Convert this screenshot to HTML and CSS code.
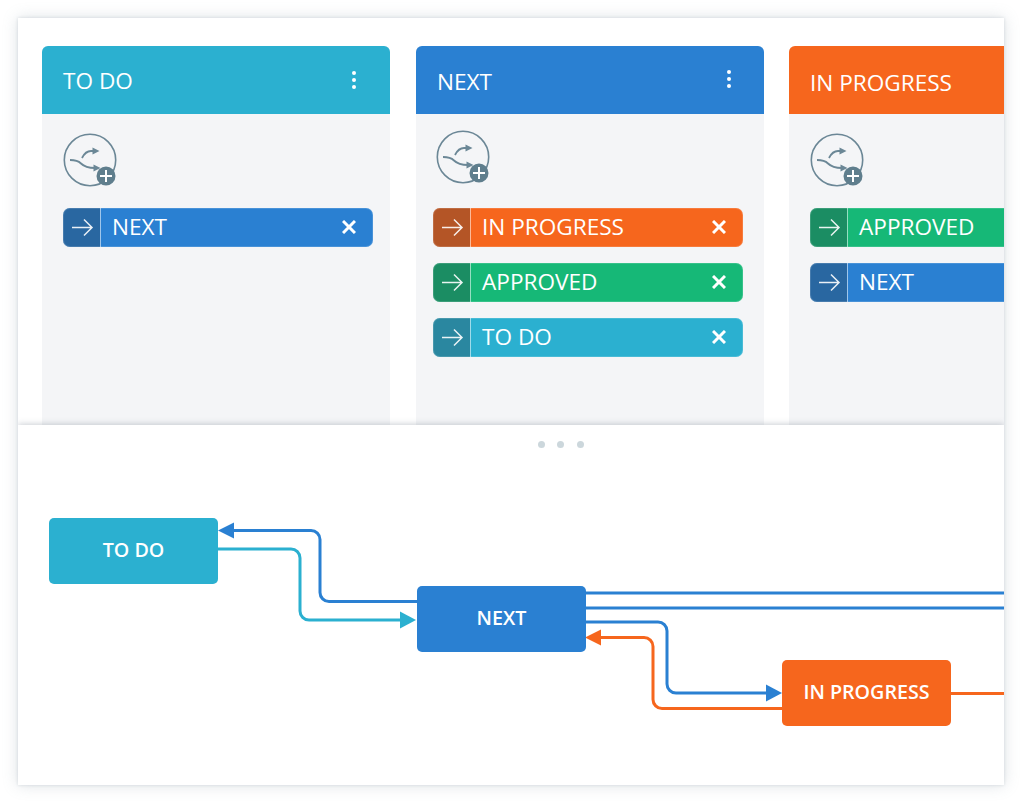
FILE: index.html
```html
<!DOCTYPE html>
<html lang="en">
<head>
<meta charset="utf-8">
<title>Workflow</title>
<link rel="stylesheet" href="styles.css">
</head>
<body>
<svg class="defs" width="0" height="0" aria-hidden="true">
  <defs>
    <symbol id="flow" viewBox="0 0 56 56">
      <circle cx="27" cy="27" r="25.700" fill="none" stroke="#6b8796" stroke-width="1.600"/>
      <path d="M7 27c5 0 8 .5 11 3.500s6 4.500 14 4.500" fill="none" stroke="#6b8796" stroke-width="1.800"/>
      <path d="M19 25c2-4 5-7 9-7h4" fill="none" stroke="#6b8796" stroke-width="1.800"/>
      <path d="M36.500 18l-7-3.500v7zM37.500 35l-7-3.500v7z" fill="#6b8796"/>
      <circle cx="43" cy="43" r="9.500" fill="#5f7e8d"/>
      <path d="M43 37v12M37 43h12" stroke="#fff" stroke-width="2"/>
    </symbol>
    <symbol id="arrow" viewBox="0 0 37 38">
      <path d="M9 19.500H29M21 11.500l8 8-8 8" fill="none" stroke="#fff" stroke-opacity=".9" stroke-width="1.500"/>
    </symbol>
    <symbol id="close" viewBox="0 0 14 14">
      <path d="M1 1l12 12M13 1L1 13" stroke="#fff" stroke-width="3"/>
    </symbol>
    <symbol id="kebab" viewBox="0 0 6 20">
      <circle cx="3" cy="3" r="2" fill="#fff"/>
      <circle cx="3" cy="10" r="2" fill="#fff"/>
      <circle cx="3" cy="17" r="2" fill="#fff"/>
    </symbol>
  </defs>
</svg>
<main class="panel">
  <section class="board">
    <article class="column">
      <header class="col-head cyan">
        <h2 class="col-title">TO DO</h2>
        <svg class="kebab"><use href="#kebab"/></svg>
      </header>
      <div class="col-body">
        <svg class="flow-icon"><use href="#flow"/></svg>
        <ul class="chips">
          <li class="chip blue"><span class="chip-arrow"><svg class="arrow-icon"><use href="#arrow"/></svg></span><span class="chip-label">NEXT</span><svg class="close-icon"><use href="#close"/></svg></li>
        </ul>
      </div>
    </article>
    <article class="column column-next">
      <header class="col-head blue">
        <h2 class="col-title">NEXT</h2>
        <svg class="kebab"><use href="#kebab"/></svg>
      </header>
      <div class="col-body">
        <svg class="flow-icon"><use href="#flow"/></svg>
        <ul class="chips">
          <li class="chip orange"><span class="chip-arrow"><svg class="arrow-icon"><use href="#arrow"/></svg></span><span class="chip-label">IN PROGRESS</span><svg class="close-icon"><use href="#close"/></svg></li>
          <li class="chip green"><span class="chip-arrow"><svg class="arrow-icon"><use href="#arrow"/></svg></span><span class="chip-label">APPROVED</span><svg class="close-icon"><use href="#close"/></svg></li>
          <li class="chip cyan"><span class="chip-arrow"><svg class="arrow-icon"><use href="#arrow"/></svg></span><span class="chip-label">TO DO</span><svg class="close-icon"><use href="#close"/></svg></li>
        </ul>
      </div>
    </article>
    <article class="column column-progress">
      <header class="col-head orange">
        <h2 class="col-title">IN PROGRESS</h2>
      </header>
      <div class="col-body">
        <svg class="flow-icon"><use href="#flow"/></svg>
        <ul class="chips">
          <li class="chip green"><span class="chip-arrow"><svg class="arrow-icon"><use href="#arrow"/></svg></span><span class="chip-label">APPROVED</span><svg class="close-icon"><use href="#close"/></svg></li>
          <li class="chip blue"><span class="chip-arrow"><svg class="arrow-icon"><use href="#arrow"/></svg></span><span class="chip-label">NEXT</span><svg class="close-icon"><use href="#close"/></svg></li>
        </ul>
      </div>
    </article>
  </section>
  <section class="diagram">
    <div class="grip"><i class="grip-dot"></i><i class="grip-dot"></i><i class="grip-dot"></i></div>
    <svg class="links" viewBox="18 425 986 360">
      <g fill="none" stroke-width="3">
        <path class="stroke-blue" d="M417 601.500H329a9 9 0 0 1-9-9V539.500a9 9 0 0 0-9-9H232"/>
        <path class="stroke-cyan" d="M218 549H291a9 9 0 0 1 9 9V611a9 9 0 0 0 9 9H402"/>
        <path class="stroke-blue" d="M586 593H1004M586 608H1004"/>
        <path class="stroke-blue" d="M586 622H658a9 9 0 0 1 9 9V684a9 9 0 0 0 9 9H769"/>
        <path class="stroke-orange" d="M782 708.500H662a9 9 0 0 1-9-9V646.500a9 9 0 0 0-9-9H599"/>
        <path class="stroke-orange" d="M951 693.500H1004"/>
      </g>
      <path class="fill-blue" d="M218 530.500l16-8v16z"/>
      <path class="fill-cyan" d="M416 620l-16-8.500v17z"/>
      <path class="fill-blue" d="M782 693l-16-8.500v17z"/>
      <path class="fill-orange" d="M585 637.500l16-8v16z"/>
    </svg>
    <div class="node node-todo cyan">TO DO</div>
    <div class="node node-next blue">NEXT</div>
    <div class="node node-progress orange">IN PROGRESS</div>
  </section>
</main>
</body>
</html>
```
FILE: styles.css
```css
* { box-sizing: border-box; }
html, body { margin: 0; height: 100%; background: #fff; overflow: hidden; }
body { padding: 18px 20px 19px 18px; font-family: "Open Sans", "Liberation Sans", sans-serif; color: #fff; }
.defs { position: absolute; }

.panel {
  height: 767px;
  width: 986px;
  background: #fff;
  display: flex;
  flex-direction: column;
  overflow: hidden;
  box-shadow: 0 0 3px rgba(140, 155, 170, .3), 0 0 14px rgba(140, 155, 170, .3);
}

.cyan { background: #2bb0d0; }
.blue { background: #2a80d2; }
.orange { background: #f6661d; }
.green { background: #16b877; }

.board {
  height: 407px;
  display: flex;
  gap: 26px;
  padding: 28px 0 0 24px;
  overflow: hidden;
  flex: none;
}
.column { width: 348px; flex: none; background: #f4f5f7; border-radius: 6px 6px 0 0; }
.column-progress { margin-left: -1px; }

.col-head {
  height: 68px;
  border-radius: 6px 6px 0 0;
  display: flex;
  align-items: center;
  justify-content: space-between;
  padding: 0 33px 0 21px;
}
.column-next .col-head { padding-right: 32px; }
.col-title { margin: 1px 0 0; font-size: 22.600px; font-weight: 400; line-height: 30px; }
.column-next .col-title { margin-top: 3px; }
.column-progress .col-title { margin-top: 5px; }
.kebab { width: 6px; height: 20px; margin-bottom: 1px; }
.column-next .kebab { margin-bottom: 3px; }

.col-body { padding: 19px 0 0 21px; }
.flow-icon { display: block; width: 56px; height: 56px; }
.column-next .flow-icon { margin: -3px 0 0 -1px; }

.chips { list-style: none; margin: 19px 0 0; padding: 0; display: flex; flex-direction: column; gap: 17px; }
.column-next .chips { margin: 22px 0 0 -4px; gap: 16.500px; }
.column-progress .chips { gap: 16.500px; }

.chip {
  width: 310px;
  height: 38.500px;
  border-radius: 7px;
  display: flex;
  align-items: center;
  overflow: hidden;
  flex: none;
  outline: 1px solid rgba(255, 255, 255, .14);
  outline-offset: -1px;
}
.chip-arrow {
  width: 37px;
  height: 100%;
  background: rgba(40, 50, 60, .32);
  flex: none;
}
.arrow-icon { display: block; width: 37px; height: 38px; }
.chip-label {
  flex: 1;
  height: 100%;
  padding-left: 11px;
  border-left: 1.500px solid rgba(255, 255, 255, .55);
  font-size: 22.600px;
  line-height: 37px;
}
.close-icon { width: 14px; height: 14px; margin-right: 17px; flex: none; }

.diagram {
  position: relative;
  flex: 1;
  background: #fff;
  box-shadow: 0 -1px 6px rgba(110, 120, 135, .35);
}
.grip { display: flex; gap: 12.500px; position: absolute; left: 519.500px; top: 15.500px; }
.grip-dot { width: 7px; height: 7px; border-radius: 50%; background: #ccd7dc; display: block; }

.links { position: absolute; left: 0; top: 0; width: 986px; height: 360px; }
.stroke-blue { stroke: #2a80d2; }
.stroke-cyan { stroke: #2bb0d0; }
.stroke-orange { stroke: #f6661d; }
.fill-blue { fill: #2a80d2; }
.fill-cyan { fill: #2bb0d0; }
.fill-orange { fill: #f6661d; }

.node {
  position: absolute;
  width: 169px;
  height: 66px;
  padding-bottom: 3px;
  border-radius: 5px;
  display: flex;
  align-items: center;
  justify-content: center;
  font-size: 19.700px;
  font-weight: 600;
}
.node-todo { left: 31px; top: 93px; }
.node-next { left: 399px; top: 161px; }
.node-progress { left: 764px; top: 235px; }
```
